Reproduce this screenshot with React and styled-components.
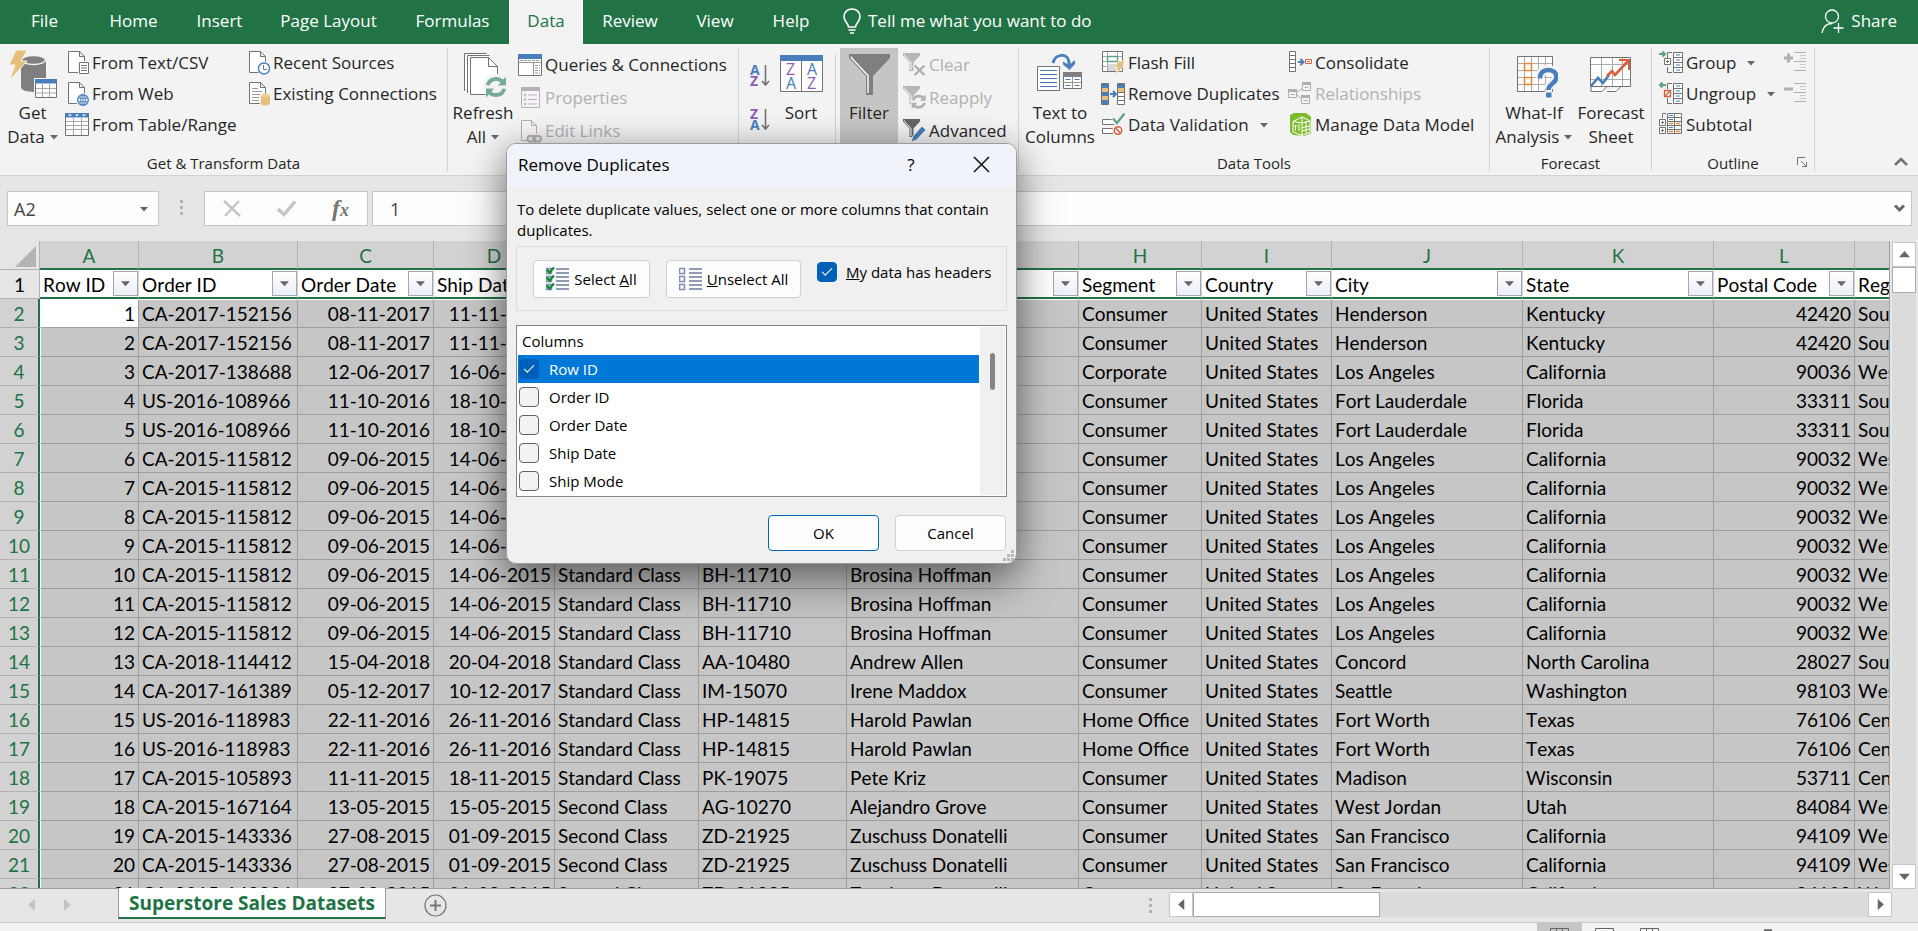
import React from "react";
import styled, { createGlobalStyle, css } from "styled-components";

const UI_FONT = '"Open Sans", "Noto Sans", sans-serif';
const CELL_FONT = 'Lato, "Open Sans", sans-serif';
const GREEN = "#217346";

const GlobalStyle = createGlobalStyle`
  *, *::before, *::after { box-sizing: border-box; }
  body { margin: 0; overflow: hidden; font-family: ${UI_FONT}; color: #262626; background: #e6e6e6; }
  button, input { font: inherit; color: inherit; }
  button { background: none; border: 0; padding: 0; }
  svg { display: block; flex: none; }
`;

const Window = styled.div`
  position: relative;
  height: 100vh;
  display: flex;
  flex-direction: column;
  overflow: hidden;
`;

/* ---------- Tab strip ---------- */

const TabStrip = styled.nav`
  display: flex;
  flex: none;
  height: 44px;
  background: ${GREEN};
  color: #fff;
  font-size: 17px;
  line-height: 42px;
`;
const Tab = styled.button`
  width: ${(p) => p.$w}px;
  padding-bottom: 2px;
  text-align: center;
  white-space: nowrap;
  ${(p) => p.$active && css`background: #f3f3f3; color: ${GREEN};`}
`;
const TellMe = styled.button`
  display: flex;
  gap: 6px;
  padding: 0 0 2px 13px;
  align-items: center;
  white-space: nowrap;
`;
const ShareButton = styled(TellMe)`
  margin-left: auto;
  padding-right: 21px;
  gap: 6px;
`;

/* ---------- Ribbon ---------- */

const Ribbon = styled.section`
  display: flex;
  flex: none;
  height: 132px;
  padding: 4px 0;
  background: #f3f3f3;
  border-bottom: 1px solid #d2d2d2;
  font-size: 17px;
`;
const Group = styled.div`
  display: flex;
  flex-direction: column;
  flex: none;
  width: ${(p) => p.$w}px;
  border-right: 1px solid #d2d2d2;
`;
const GroupBody = styled.div`
  display: flex;
  flex: 1;
  min-height: 0;
  padding-left: ${(p) => p.$pad || 0}px;
`;
const GroupLabel = styled.div`
  display: flex;
  justify-content: center;
  position: relative;
  height: 16px;
  font-size: 15px;
  line-height: 16px;
`;
const Launcher = styled.button`
  position: absolute;
  right: 6px;
  top: 2px;
`;
const LargeButton = styled.button`
  display: flex;
  flex-direction: column;
  align-items: center;
  width: ${(p) => p.$w}px;
  height: 106px;
  padding-top: 2px;
  line-height: 24px;
  white-space: nowrap;
  background: ${(p) => (p.$pressed ? "#c5c5c5" : "none")};
  svg.large { margin-bottom: 3px; }
`;
const LabelLine = styled.span`
  display: flex;
  align-items: center;
  gap: 5px;
`;
const Stack = styled.div`
  display: flex;
  flex-direction: column;
  flex: none;
  width: ${(p) => (p.$w ? p.$w + "px" : "auto")};
`;
const SmallButton = styled.button`
  display: flex;
  align-items: center;
  gap: 3px;
  height: ${(p) => p.$h || 31}px;
  padding-bottom: ${(p) => (p.$h ? 0 : 2)}px;
  line-height: 24px;
  white-space: nowrap;
  color: ${(p) => (p.disabled ? "#b1b1b1" : "inherit")};
  svg.arrow { margin-left: 8px; }
`;
const OrderButton = styled.button`
  display: flex;
  align-items: center;
  justify-content: center;
  width: 28px;
  height: 44px;
`;
const SortColumn = styled(Stack)`
  padding: 5px 0 0 4px;
  margin-left: 4px;
  margin-right: -4px;
`;
const Divider = styled.div`
  width: 1px;
  height: 92px;
  margin: 6px 4px 0;
  background: #d2d2d2;
`;
const CollapseButton = styled.button`
  margin: auto 10px 4px auto;
`;

/* ---------- Formula bar ---------- */

const FormulaBar = styled.section`
  display: flex;
  flex: none;
  height: 65px;
  padding: 15px 6px 15px 7px;
  background: #e6e6e6;
  font-size: 18px;
`;
const Field = styled.div`
  display: flex;
  align-items: center;
  height: 35px;
  border: 1px solid #c6c6c6;
  background: #fdfdfd;
  color: #444;
  padding-right: ${(p) => p.$end || 0}px;
  width: ${(p) => (p.$w ? p.$w + "px" : "auto")};
  flex: ${(p) => (p.$w ? "none" : "1")};
`;
const FieldInput = styled.input`
  flex: 1;
  min-width: 0;
  height: 100%;
  border: 0;
  background: none;
  outline: none;
  padding: 0 0 0 ${(p) => p.$pad}px;
`;
const Dots = styled.span`
  display: grid;
  align-content: center;
  justify-content: center;
  gap: 3px;
  width: ${(p) => p.$w}px;
  height: ${(p) => p.$h}px;
  i { width: 3px; height: 3px; background: #b4b4b4; }
`;
const FormulaActions = styled(Field)`
  justify-content: space-between;
  padding: 0 18px;
  margin-right: 4px;
`;
const FxButton = styled.button`
  font: italic bold 24px "Liberation Serif", serif;
  line-height: 28px;
  color: #767676;
  small { font-size: 18px; }
`;

/* ---------- Sheet ---------- */

const SheetArea = styled.main`
  display: flex;
  flex: 1;
  min-height: 0;
`;
const GridClip = styled.div`
  flex: 1;
  min-width: 0;
  overflow: hidden;
  border-right: 1px solid #9f9f9f;
  border-bottom: 1px solid #9f9f9f;
`;
const Grid = styled.table`
  table-layout: fixed;
  width: 1975px;
  border-collapse: separate;
  border-spacing: 0;
  font-family: ${CELL_FONT};
  font-size: 19px;
  line-height: 24px;
  font-kerning: none;
  color: #000;
  th, td { height: 29px; padding: 2px 3px 0; font-weight: 400; white-space: nowrap; overflow: hidden; }
`;
const ColumnHead = styled.th`
  background: #d2d2d2;
  color: ${GREEN};
  border-right: 1px solid #b1b1b1;
  border-bottom: 2px solid ${GREEN};
  && { padding-top: 3px; }
`;
const Corner = styled.th`
  background: #e6e6e6;
  border-right: 1px solid #b1b1b1;
  border-bottom: 1px solid #b1b1b1;
  svg { margin: 0 0 0 12px; }
`;
const RowHead = styled.th`
  text-align: center;
  border-bottom: 1px solid #b1b1b1;
  ${(p) =>
    p.$selected
      ? css`background: #d2d2d2; color: ${GREEN}; border-right: 2px solid ${GREEN};`
      : css`background: #e6e6e6; border-right: 1px solid #b1b1b1;`}
`;
const TitleCell = styled.td`
  background: #fff;
  border-right: 1px solid #d4d4d4;
  border-bottom: 2px solid ${GREEN};
  && { padding: 0 0 0 3px; }
`;
const TitleInner = styled.div`
  display: flex;
  justify-content: space-between;
  align-items: center;
  height: 27px;
  line-height: 27px;
  span { padding-top: 2px; }
`;
const FilterButton = styled.button`
  display: grid;
  place-items: center;
  flex: none;
  width: 25px;
  height: 25px;
  border: 1px solid #a3a9b4;
  background: linear-gradient(#fdfdfe, #eceff5);
`;
const Cell = styled.td`
  background: ${(p) => (p.$active ? "#fff" : "#c6c6c6")};
  text-align: ${(p) => (p.$right ? "right" : "left")};
  border-right: 1px solid #9f9f9f;
  border-bottom: 1px solid #9f9f9f;
  ${(p) => p.$first && css`border-left: 1px solid #fff;`}
  ${(p) => p.$top && css`border-top: 1px solid #fff; && { padding-top: 0; }`}
`;
const VScroll = styled.div`
  display: flex;
  flex-direction: column;
  width: 24px;
  margin: 1px 2px 0;
  background: #dbdbdb;
`;
const ScrollButton = styled.button`
  display: grid;
  place-items: center;
  flex: none;
  width: 24px;
  height: 25px;
  border: 1px solid #c6c6c6;
  background: #fff;
`;
const VThumb = styled.div`
  height: 26px;
  border: 1px solid #ababab;
  background: #fff;
  margin-bottom: auto;
`;

/* ---------- Sheet tabs and status ---------- */

const SheetBar = styled.footer`
  display: flex;
  flex: none;
  height: 34px;
  background: #e6e6e6;
  border-bottom: 1px solid #c6c6c6;
`;
const SheetNav = styled.div`
  display: flex;
  align-items: center;
  gap: 29px;
  width: 118px;
  padding: 0 0 2px 28px;
`;
const SheetTab = styled.button`
  height: 31px;
  width: 268px;
  margin-top: -1px;
  background: #fff;
  color: ${GREEN};
  border: 1px solid #9f9f9f;
  border-top: 0;
  border-bottom: 2px solid ${GREEN};
  font-weight: 700;
  font-size: 19px;
  line-height: 26px;
  white-space: nowrap;
`;
const AddSheet = styled.button`
  margin: 0 auto 0 38px;
`;
const HScroll = styled.div`
  display: flex;
  width: 723px;
  height: 25px;
  margin: 3px 26px 0 6px;
  background: #dbdbdb;
`;
const HThumb = styled.div`
  width: 187px;
  margin-right: auto;
  border: 1px solid #ababab;
  background: #fff;
`;
const StatusBar = styled.div`
  display: flex;
  justify-content: flex-end;
  flex: none;
  height: 8px;
  padding-right: 146px;
  background: #f3f3f3;
  overflow: hidden;
`;
const ViewButton = styled.button`
  display: flex;
  justify-content: center;
  width: 45px;
  height: 30px;
  padding-top: 5px;
  background: ${(p) => (p.$active ? "#c6c6c6" : "none")};
`;
const ZoomThumb = styled.span`
  width: 8px;
  height: 18px;
  margin: 6px 0 0 92px;
  background: #767676;
`;

/* ---------- Dialog ---------- */

const Dialog = styled.div`
  position: absolute;
  left: 506px;
  top: 143px;
  width: 511px;
  display: flex;
  flex-direction: column;
  border: 1px solid #9c9c9c;
  border-radius: 10px;
  background: #f0f0f0;
  color: #000;
  font-size: 15px;
  line-height: 21px;
  overflow: hidden;
`;
const DialogShadow = styled.div`
  position: absolute;
  left: 506px;
  top: 143px;
  width: 511px;
  height: 421px;
  border-radius: 10px;
  box-shadow: 0 20px 44px rgba(0, 0, 0, 0.4), 0 2px 30px rgba(0, 0, 0, 0.22);
`;
const DialogTitle = styled.header`
  display: flex;
  align-items: center;
  height: 43px;
  padding: 0 26px 2px 11px;
  background: #f0f3fa;
  font-size: 17px;
  h1 { margin: 0 auto 0 0; font-size: 17px; font-weight: 400; }
`;
const HelpButton = styled.button`
  width: 24px;
  margin-right: 50px;
`;
const DialogBody = styled.div`
  padding: 12px 9px 12px;
`;
const Message = styled.p`
  margin: 0 0 5px 1px;
`;
const OptionsBox = styled.div`
  display: flex;
  gap: 16px;
  height: 65px;
  padding: 13px 0 13px 16px;
  border: 1px solid #dcdcdc;
`;
const PushButton = styled.button`
  display: flex;
  align-items: center;
  justify-content: center;
  gap: 5px;
  width: ${(p) => p.$w}px;
  height: ${(p) => p.$h}px;
  flex: none;
  border: 1px solid ${(p) => (p.$primary ? "#0067c0" : "#d0d0d0")};
  border-radius: 4px;
  background: #fdfdfd;
  white-space: nowrap;
`;
const CheckLabel = styled.label`
  display: flex;
  align-items: center;
  gap: 9px;
  height: ${(p) => p.$h}px;
  white-space: nowrap;
  ${(p) => p.$highlight && css`background: #0078d7; color: #fff;`}
  ${(p) => p.$row && css`padding-left: 1px; gap: 10px;`}
`;
const CheckBox = styled.input`
  appearance: none;
  display: grid;
  place-items: center;
  flex: none;
  width: 20px;
  height: 20px;
  margin: 0;
  border: 1px solid #626262;
  border-radius: 4px;
  background: #f3f3f3;
  &:checked { background: #005fb8; border-color: #005fb8; }
  &:checked::after {
    content: "";
    width: 10px;
    height: 5px;
    border: solid #fff;
    border-width: 0 0 1px 1px;
    transform: rotate(-45deg);
    margin-bottom: 3px;
  }
`;
const ListBox = styled.div`
  display: flex;
  height: 172px;
  margin-top: 14px;
  padding: 1px;
  border: 1px solid #828790;
  background: #fff;
`;
const ListItems = styled.div`
  flex: 1;
`;
const ListHead = styled.div`
  height: 28px;
  padding: 4px 0 0 4px;
`;
const ListScroll = styled.div`
  width: 25px;
  margin-left: 1px;
  padding: 26px 0 0 10px;
  background: #f0f0f0;
`;
const ListThumb = styled.div`
  width: 5px;
  height: 37px;
  border-radius: 3px;
  background: #868686;
`;
const DialogActions = styled.div`
  display: flex;
  justify-content: flex-end;
  gap: 16px;
  margin-top: 18px;
  padding-right: 1px;
`;
const Grip = styled.svg`
  position: absolute;
  right: 1px;
  bottom: 1px;
`;

/* ---------- Icons ---------- */

const Arrow = ({ dir = "down", color = "#666", size = 8 }) => {
  const angle = { down: 0, left: 90, up: 180, right: 270 }[dir];
  return (
    <svg className="arrow" width={size} height={size} viewBox="0 0 8 8">
      <path d="M0 2h8L4 6.5z" fill={color} transform={`rotate(${angle} 4 4)`} />
    </svg>
  );
};
const S = ({ children, ...rest }) => (
  <svg width="24" height="24" viewBox="0 0 24 24" fill="none" stroke="#737373" {...rest}>{children}</svg>
);
const L = ({ children }) => (
  <svg className="large" width="48" height="48" viewBox="0 0 48 48" fill="none" stroke="#737373">{children}</svg>
);
const Page = () => <path d="M3.500.5h11l5 5v16h-16zM14.500.5v5h5" fill="#fff" />;

const TextCsvIcon = () => <S><Page /><path d="M14.500 11.500h9v11h-9z" fill="#fff" stroke="#f3f3f3" strokeWidth="3" /><path d="M14.500 11.500h9v11h-9z" fill="#fff" /><path d="M16 14.500h6M16 17h6M16 19.500h6" /></S>;
const WebIcon = () => <S><Page /><circle cx="18" cy="18" r="7" fill="#f3f3f3" stroke="none" /><g stroke="#4a7ebb"><circle cx="18" cy="18" r="5.300" fill="#fff" strokeWidth="1.300" /><ellipse cx="18" cy="18" rx="2.300" ry="5.300" /><path d="M13 16.200h10M13 19.800h10M18 13v10" /></g></S>;
const TableIcon = () => <S><path d="M.5 1.500h23v21H.5z" fill="#fff" /><path d="M0 0h24v4.500H0z" fill="#4a7ebb" stroke="none" /><path d="M3 1.500h4l-2 2zM10 1.500h4l-2 2zM17 1.500h4l-2 2z" fill="#fff" stroke="none" /><path d="M1 8.500h22M1 12.500h22M1 16.500h22M8.500 5v17M16.500 5v17" stroke="#a8a8a8" /></S>;
const RecentIcon = () => <S><Page /><circle cx="18" cy="17.500" r="7" fill="#f3f3f3" stroke="none" /><circle cx="18" cy="17.500" r="5.500" fill="#fff" stroke="#4a7ebb" strokeWidth="1.400" /><path d="M17.500 14v4.500h3.500" /></S>;
const ExistingIcon = () => <S><Page /><path d="M6 6.500h6M6 9.500h10M6 12.500h9M6 15.500h7M6 18.500h7" stroke="#999" /><path d="M14 12h10v12H14z" fill="#f3f3f3" stroke="none" /><path d="M15 13.500v8c0 2.500 9 2.500 9 0v-8z" fill="#e8bf7a" stroke="none" /><ellipse cx="19.500" cy="13.500" rx="4.500" ry="1.800" fill="#f0cf94" stroke="none" /></S>;
const GetDataIcon = () => (
  <L>
    <path d="M12 10v27c0 6.500 25 6.500 25 0V10z" fill="#7f7f7f" stroke="none" />
    <ellipse cx="24.500" cy="10" rx="12" ry="4.500" fill="#7f7f7f" stroke="#f3f3f3" strokeWidth="1.300" />
    <path d="M7 0h11l-6 11h6L.5 30.500 6 15H0z" fill="#e8bf7a" stroke="#f3f3f3" strokeWidth="1" />
    <path d="M25 28h23v20H25z" fill="#f3f3f3" stroke="none" />
    <path d="M26.500 29.500h21v18h-21z" fill="#fff" /><path d="M26 29h22v4.500H26z" fill="#4a7ebb" stroke="none" />
    <path d="M27 38.500h20M27 43h20M33.500 34v13M40.500 34v13" stroke="#a8a8a8" />
  </L>
);
const Cycle = ({ x, y, s = 1, color }) => (
  <g transform={`translate(${x} ${y}) scale(${s})`} stroke="none" fill={color}>
    <path d="M1 9C2 4 6 1 11 1c3 0 5.500 1 7 2.500L21 1v8.500h-8l2.500-3C14.500 5.500 13 5 11 5 8 5 5.500 6.500 4.500 9.500z" />
    <path d="M21 13c-1 5-5 8-10 8-3 0-5.500-1-7-2.500L1 21.500v-9h8l-2.500 3c1 1 2.500 1.500 4.500 1.500 3 0 5.500-1.500 6.500-4.500z" />
  </g>
);
const RefreshIcon = () => (
  <L>
    <path d="M5.500 41V3.500h22M8.500 43V5.500h22M11.500 7.500h18l9 9v28h-27z" fill="#fff" /><path d="M29.500 7.500v9h9" />
    <circle cx="37" cy="37" r="13" fill="#f3f3f3" stroke="none" /><Cycle x={26} y={26} color="#76ab96" />
  </L>
);
const QueriesIcon = () => <S><path d="M.5 2.500h23v20H.5z" fill="#fff" /><path d="M0 1h24v5H0z" fill="#4a7ebb" stroke="none" /><path d="M1 9.500h22M15.500 10v12" stroke="#999" /><path d="M17 12.500h5M17 15h5M17 17.500h5M17 20h5M2 7.500h20" stroke="#999" strokeDasharray="3 1" /></S>;
const PropertiesIcon = () => <S stroke="#b5b0b5"><path d="M3.500 2.500h18v19h-18z" fill="#faf4fa" /><path d="M3 1h19v4H3z" fill="#b5b0b5" stroke="none" /><circle cx="7" cy="9" r="1" /><circle cx="7" cy="13.500" r="1" /><circle cx="7" cy="18" r="1" /><path d="M10 9h9M10 13.500h9M10 18h9" /></S>;
const EditLinksIcon = () => <S stroke="#b5b0b5"><path d="M3.500 1.500h10l5 5v15h-15zM13.500 1.500v5h5" fill="#faf4fa" /><path d="M9 15h15v9H9z" fill="#f0f0f0" stroke="none" /><rect x="9.500" y="17" width="8" height="5.500" rx="2.700" strokeWidth="2" /><rect x="15" y="17" width="8" height="5.500" rx="2.700" strokeWidth="2" /></S>;
const letter = { fontFamily: "Open Sans, sans-serif", stroke: "none" };
const OrderIcon = ({ first, second, c1, c2 }) => (
  <S><text x="1" y="12" fontSize="14" fontWeight="700" fill={c1} {...letter}>{first}</text><text x="1" y="23" fontSize="14" fontWeight="700" fill={c2} {...letter}>{second}</text><path d="M16.500 2v20M13 18l3.500 4 3.500-4" strokeWidth="1.600" /></S>
);
const SortIcon = () => (
  <L>
    <path d="M3.500 5.500h42v36h-42zM24.500 11v30" fill="#fff" /><path d="M3 5h43v6H3z" fill="#4a7ebb" stroke="none" />
    <g fontSize="16" {...letter}>
      <text x="9" y="25" fill="#8e5bb5">Z</text><text x="9" y="39" fill="#4a7ebb">A</text>
      <text x="30" y="25" fill="#4a7ebb">A</text><text x="30" y="39" fill="#8e5bb5">Z</text>
    </g>
  </L>
);
const FilterIcon = () => <L><path d="M4 4h41v4L28 26v19h-7V26L4 8z" fill="#7f7f7f" stroke="none" /><path d="M6.500 6.500v1.500L23 25.500V43" stroke="#fff" strokeWidth="1.400" /></L>;
const SmallFunnel = ({ color, light = "#fff" }) => <><path d="M1 0h17v2.500l-6.500 7V18h-4V9.500L1 2.500z" fill={color} stroke="none" /><path d="M2.500 1.500v1l6.500 7V17" stroke={light} /></>;
const ClearIcon = () => <S><SmallFunnel color="#b8b4b8" /><path d="M12 12l11 10M23 12L12 22" stroke="#f3f3f3" strokeWidth="5" /><path d="M12.500 12.500l10 9.500M22.500 12.500l-10 9.500" stroke="#aaa" strokeWidth="2.200" /></S>;
const ReapplyIcon = () => <S><SmallFunnel color="#b8b4b8" /><circle cx="17" cy="16" r="8" fill="#f3f3f3" stroke="none" /><Cycle x={9} y={8} s={0.7} color="#b0b0b0" /></S>;
const AdvancedIcon = () => <S><SmallFunnel color="#666" /><path d="M9 23l2-6L20 7l4 4-9.500 10z" fill="#4a7ebb" stroke="#f3f3f3" /></S>;
const TextColumnsIcon = () => (
  <L>
    <path d="M1.500 16.500h22v24h-22z" fill="#fff" /><path d="M4 20.500h17M4 24.500h17M4 28.500h17M4 32.500h17M4 36.500h17" stroke="#4a7ebb" />
    <path d="M27.500 22.500h18v16h-18z" fill="#fff" /><path d="M27 22h19v5H27z" fill="#7f7f7f" stroke="none" /><path d="M28 32.500h17M36.500 27v11" stroke="#999" /><path d="M29.500 29.500h5M38.500 29.500h5M29.500 35.500h5M38.500 35.500h5" stroke="#4a7ebb" />
    <path d="M17 13C19 3 32 3 33 12v5" stroke="#4a7ebb" strokeWidth="3" /><path d="M27 11.500l6 3.500 6-5v4L33.500 20 27 14.500z" fill="#4a7ebb" stroke="none" />
  </L>
);
const FlashIcon = () => <S><path d="M1.500.5h20v20h-20z" fill="#fff" /><path d="M2 5.500h19M2 10.500h19M2 15.500h19M6.500 1v19M16.500 1v19" stroke="#aaa" /><path d="M6.500 5.500h10v5h-10z" fill="#fff" stroke="#62a08a" strokeWidth="1.400" /><path d="M7 13h8v7H7z" fill="#d8d8d8" stroke="none" /><path d="M17 10h7l-3 5h2.500L14 23.500l3-7h-3z" fill="#e8bf7a" stroke="#f3f3f3" strokeWidth=".6" /></S>;
const DuplicatesIcon = () => <S><path d="M.5 1.500h7v21h-7zM16.500 1.500h7v21h-7z" fill="#fff" /><path d="M1 2h6v4H1zM1 10h6v4H1zM1 18h6v4H1zM17 2h6v4h-6z" fill="#4a7ebb" stroke="none" /><path d="M1 6h6v4H1zM1 14h6v4H1zM17 6h6v4h-6z" fill="#e8bf7a" stroke="none" /><path d="M17 10.500h6M17 14.500h6M17 18.500h6" /><path d="M9 12h5.500M12 9l3 3-3 3" stroke="#4a7ebb" strokeWidth="2" /></S>;
const ValidationIcon = () => <S><path d="M1.500 6.500h12v5h-12zM1.500 15.500h12v5h-12z" fill="#fff" /><path d="M12 5.500l4 5L23.500 0" stroke="#f3f3f3" strokeWidth="5" /><path d="M12 5.500l4 4.500L23.500.5" stroke="#62a08a" strokeWidth="2.400" /><circle cx="17" cy="17.500" r="5.500" fill="#f3f3f3" stroke="none" /><circle cx="17" cy="17.500" r="3.800" stroke="#d9603f" strokeWidth="1.500" /><path d="M14.500 15l5 5" stroke="#d9603f" strokeWidth="1.500" /></S>;
const ConsolidateIcon = () => <S><path d="M1.500.5h6v20h-6zM2 4.500h5M2 8.500h5M2 12.500h5M2 16.500h5" fill="#fff" /><path d="M10 11h5M12.500 8l3 3-3 3" stroke="#4a7ebb" strokeWidth="2" /><path d="M17.500 8.500h6v4h-6zM19 10.500h3" fill="#fff" stroke="#d9603f" /></S>;
const RelationIcon = () => <S stroke="#b0b0b0"><path d="M8 11l7-5M8 12l6 5" /><path d="M.5 7.500h8v8h-8zM14.500.5h8v8h-8zM13.500 13.500h8v8h-8z" fill="#f7f2f7" /><path d="M0 7h9v3H0zM14 0h9v3h-9zM13 13h9v3h-9z" fill="#b0b0b0" stroke="none" /><path d="M2.500 12.500h4M16.500 5.500h4M15.500 18.500h4" /></S>;
const ModelIcon = () => <S stroke="none"><path d="M2 2L6 0h12l5 4v16l-7 3-11-1-3-3z" fill="#7cbb2c" /><g stroke="#fff"><path d="M5 8.500L14 4l8 4v11l-8 3.500L5 19zM14 4v18M5 8.500l9 1.500 8-2M14 14.500l8-1.500M14 18l8-2M18 8v12" /><path d="M7.500 18v-6M6 13.500L7.500 12 9 13.500M11 11v7" /></g></S>;
const WhatIfIcon = () => (
  <L>
    <path d="M7.500 6.500h35v35h-35z" fill="#fff" /><path d="M14.500 7v34M21.500 7v34M28.500 7v34M35.500 7v34M8 13.500h34M8 20.500h34M8 27.500h34M8 34.500h34" stroke="#aaa" />
    <path d="M14.500 13.500h7v7h-7zM14.500 27.500h7v7h-7z" fill="#fff" stroke="#e28a3c" strokeWidth="1.600" />
    <path d="M30 28c0-6 4-8.500 8-8.500S46.500 22 46.500 27c0 7-8 6-8 12" stroke="#f3f3f3" strokeWidth="9" /><path d="M35 41h7v7h-7z" fill="#f3f3f3" stroke="none" />
    <path d="M30 28.500c0-6 4-8.500 8-8.500s8.500 2 8.500 7c0 7-8 6-8 13" stroke="#4a7ebb" strokeWidth="4.600" /><path d="M36 42.500h5.500v5H36z" fill="#4a7ebb" stroke="none" />
  </L>
);
const ForecastIcon = () => (
  <L>
    <path d="M4 36l0 5.500h11l5-5M20 41.500h9l5-5" fill="#fff" /><path d="M3.500 7.500h40v29h-40z" fill="#fff" />
    <path d="M14.500 8v28M25.500 8v28M35.500 8v28M4 14.500h39M4 29.500h39" stroke="#aaa" />
    <path d="M4 36l7-8 5 5 6-8" stroke="#4a7ebb" strokeWidth="2.600" /><path d="M20 26l5-5 3 4L41 11" stroke="#d9603f" strokeWidth="2.600" /><path d="M32 10h10v10" stroke="#d9603f" strokeWidth="2" />
  </L>
);
const OutlineSheet = () => <><path d="M14.500 1.500h9v20h-9zM15 6.500h8M15 11.500h8M15 16.500h8" fill="#fff" /><path d="M17 4h4M17 9h4M17 14h4M17 19h4" stroke="#4a7ebb" /><path d="M13 1.500H8.500V7M8.500 16v5.500H13" /></>;
const GroupIcon = () => <S><OutlineSheet /><path d="M5.500 7.500h6v6h-6zM8.500 9v3M7 10.500h3" fill="#fff" /><path d="M0 3h5M3.500.5L6 3 3.500 5.500" stroke="#62a08a" strokeWidth="2" /></S>;
const UngroupIcon = () => <S><OutlineSheet /><path d="M5.500 8.500h6v6h-6zM6.500 13.500l4-4" fill="#fff" stroke="#d9603f" strokeWidth="1.400" /><path d="M7 3H2M3.500.5L1 3l2.500 2.500" stroke="#62a08a" strokeWidth="2" /></S>;
const SubtotalIcon = () => <S><path d="M8.500.5h14v20h-14zM15.500 1v19M9 4.500h13M9 8.500h13M9 12.500h13M9 16.500h13" fill="#fff" /><path d="M10 2.500h4M10 6.500h4M10 14.500h4" stroke="#4a7ebb" /><path d="M10 10.500h4M17 10.500h4M10 18.500h4M17 18.500h4" stroke="#e28a3c" strokeWidth="1.500" /><path d="M7 .5H3.500V5M.5 6.500h6v6h-6zM2 9.500h3M3.500 8v3M.5 14.500h6v6h-6zM2 17.500h3M3.500 16v3" fill="#fff" /></S>;
const DetailIcon = ({ plus }) => <S stroke="#b1b1b1"><path d={plus ? "M0 7h9M4.500 2.500v9" : "M0 7h9"} strokeWidth="3" /><path d="M10 1.500h12M10 10.500h12M10 19.500h12" /><path d="M16 4.500h6M16 7.500h6M16 13.500h6M16 16.500h6" stroke="#ccc" /></S>;
const BulbIcon = () => <svg width="20" height="26" viewBox="0 0 20 26" fill="none" stroke="#fff" strokeWidth="1.600"><path d="M6.500 19c0-4-4.500-5-4.500-10.500C2 4 5.500 1 10 1s8 3 8 7.500C18 14 13.500 15 13.500 19zM6.500 22h7M8 25h4" /></svg>;
const PersonIcon = () => <svg width="24" height="26" viewBox="0 0 24 26" fill="none" stroke="#fff" strokeWidth="1.300"><circle cx="11" cy="8.500" r="6.500" /><path d="M1 25c1-6 4-9.500 10-9.500M17.500 15v10M12.500 20h10" /></svg>;
const ListIcon = ({ checked }) => (
  <svg width="23" height="24" viewBox="0 0 23 24" fill="none">
    {[1, 9, 17].map((y) => (
      <g key={y}>
        <path d={`M.5 ${y + 0.5}h5v5h-5z`} fill={checked ? "#d6dce6" : "#fff"} stroke="#7c8db5" strokeWidth="1.500" />
        <path d={`M10 ${y + 1}h13M10 ${y + 5}h13`} stroke="#6c7a9c" strokeWidth="1.600" />
        {checked && <path d={`M1 ${y + 1.500}l2.500 3 4.500-5`} stroke="#0f8a2a" strokeWidth="2.200" />}
      </g>
    ))}
  </svg>
);

/* ---------- Data ---------- */

const tabs = [["File", 89], ["Home", 89], ["Insert", 83], ["Page Layout", 135], ["Formulas", 113], ["Data", 74], ["Review", 94], ["View", 76], ["Help", 76]];

const columns = [
  ["A", 99, "Row ID", true], ["B", 159, "Order ID"], ["C", 136, "Order Date", true], ["D", 121, "Ship Date", true],
  ["E", 144, "Ship Mode"], ["F", 148, "Customer ID"], ["G", 232, "Customer Name"], ["H", 123, "Segment"],
  ["I", 130, "Country"], ["J", 191, "City"], ["K", 191, "State"], ["L", 141, "Postal Code", true], ["M", 120, "Region"],
];

const brosina = ["CA-2015-115812", "09-06-2015", "14-06-2015", "Standard Class", "BH-11710", "Brosina Hoffman", "Consumer", "Los Angeles", "California", "90032", "West"];
const harold = ["US-2016-118983", "22-11-2016", "26-11-2016", "Standard Class", "HP-14815", "Harold Pawlan", "Home Office", "Fort Worth", "Texas", "76106", "Central"];
const zuschuss = ["CA-2015-143336", "27-08-2015", "01-09-2015", "Second Class", "ZD-21925", "Zuschuss Donatelli", "Consumer", "San Francisco", "California", "94109", "West"];
const claire = ["CA-2017-152156", "08-11-2017", "11-11-2017", "Second Class", "CG-12520", "Claire Gute", "Consumer", "Henderson", "Kentucky", "42420", "South"];
const sean = ["US-2016-108966", "11-10-2016", "18-10-2016", "Standard Class", "SO-20335", "Sean O'Donnell", "Consumer", "Fort Lauderdale", "Florida", "33311", "South"];
const orders = [
  claire, claire,
  ["CA-2017-138688", "12-06-2017", "16-06-2017", "Second Class", "DV-13045", "Darrin Van Huff", "Corporate", "Los Angeles", "California", "90036", "West"],
  sean, sean, brosina, brosina, brosina, brosina, brosina, brosina, brosina,
  ["CA-2018-114412", "15-04-2018", "20-04-2018", "Standard Class", "AA-10480", "Andrew Allen", "Consumer", "Concord", "North Carolina", "28027", "South"],
  ["CA-2017-161389", "05-12-2017", "10-12-2017", "Standard Class", "IM-15070", "Irene Maddox", "Consumer", "Seattle", "Washington", "98103", "West"],
  harold, harold,
  ["CA-2015-105893", "11-11-2015", "18-11-2015", "Standard Class", "PK-19075", "Pete Kriz", "Consumer", "Madison", "Wisconsin", "53711", "Central"],
  ["CA-2015-167164", "13-05-2015", "15-05-2015", "Second Class", "AG-10270", "Alejandro Grove", "Consumer", "West Jordan", "Utah", "84084", "West"],
  zuschuss, zuschuss, zuschuss,
].map((o, i) => [String(i + 1), ...o.slice(0, 7), "United States", ...o.slice(7)]);

/* ---------- Parts ---------- */

const Item = ({ icon, label, h, disabled, menu }) => (
  <SmallButton $h={h} disabled={disabled}>{icon}{label}{menu && <Arrow />}</SmallButton>
);
const Large = ({ icon, lines, w, menu, pressed }) => (
  <LargeButton $w={w} $pressed={pressed}>
    {icon}
    {lines.map((line, i) => <LabelLine key={line}>{line}{menu && i === lines.length - 1 && <Arrow />}</LabelLine>)}
  </LargeButton>
);
const Grabber = ({ w, h }) => <Dots $w={w} $h={h}><i /><i /><i /></Dots>;

function RibbonArea() {
  return (
    <Ribbon>
      <Group $w={448}>
        <GroupBody>
          <Large w={65} icon={<GetDataIcon />} lines={["Get", "Data"]} menu />
          <Stack $w={181}>
            <Item icon={<TextCsvIcon />} label="From Text/CSV" />
            <Item icon={<WebIcon />} label="From Web" />
            <Item icon={<TableIcon />} label="From Table/Range" />
          </Stack>
          <Stack>
            <Item icon={<RecentIcon />} label="Recent Sources" />
            <Item icon={<ExistingIcon />} label="Existing Connections" />
          </Stack>
        </GroupBody>
        <GroupLabel>Get &amp; Transform Data</GroupLabel>
      </Group>
      <Group $w={291}>
        <GroupBody>
          <Large w={70} icon={<RefreshIcon />} lines={["Refresh", "All"]} menu />
          <Stack>
            <Item h={33} icon={<QueriesIcon />} label="Queries & Connections" />
            <Item h={33} icon={<PropertiesIcon />} label="Properties" disabled />
            <Item h={33} icon={<EditLinksIcon />} label="Edit Links" disabled />
          </Stack>
        </GroupBody>
        <GroupLabel />
      </Group>
      <Group $w={280}>
        <GroupBody>
          <SortColumn>
            <OrderButton aria-label="Sort A to Z"><OrderIcon first="A" second="Z" c1="#4a7ebb" c2="#8e5bb5" /></OrderButton>
            <OrderButton aria-label="Sort Z to A"><OrderIcon first="Z" second="A" c1="#8e5bb5" c2="#4a7ebb" /></OrderButton>
          </SortColumn>
          <Large w={60} icon={<SortIcon />} lines={["Sort"]} />
          <Divider />
          <Large w={58} icon={<FilterIcon />} lines={["Filter"]} pressed />
          <GroupBody $pad={4}>
            <Stack>
              <Item h={33} icon={<ClearIcon />} label="Clear" disabled />
              <Item h={33} icon={<ReapplyIcon />} label="Reapply" disabled />
              <Item h={33} icon={<AdvancedIcon />} label="Advanced" />
            </Stack>
          </GroupBody>
        </GroupBody>
        <GroupLabel />
      </Group>
      <Group $w={471}>
        <GroupBody>
          <Large w={82} icon={<TextColumnsIcon />} lines={["Text to", "Columns"]} />
          <Stack $w={187}>
            <Item icon={<FlashIcon />} label="Flash Fill" />
            <Item icon={<DuplicatesIcon />} label="Remove Duplicates" />
            <Item icon={<ValidationIcon />} label="Data Validation" menu />
          </Stack>
          <Stack>
            <Item icon={<ConsolidateIcon />} label="Consolidate" />
            <Item icon={<RelationIcon />} label="Relationships" disabled />
            <Item icon={<ModelIcon />} label="Manage Data Model" />
          </Stack>
        </GroupBody>
        <GroupLabel>Data Tools</GroupLabel>
      </Group>
      <Group $w={162}>
        <GroupBody>
          <Large w={88} icon={<WhatIfIcon />} lines={["What-If", "Analysis"]} menu />
          <Large w={66} icon={<ForecastIcon />} lines={["Forecast", "Sheet"]} />
        </GroupBody>
        <GroupLabel>Forecast</GroupLabel>
      </Group>
      <Group $w={163}>
        <GroupBody $pad={7}>
          <Stack $w={125}>
            <Item icon={<GroupIcon />} label="Group" menu />
            <Item icon={<UngroupIcon />} label="Ungroup" menu />
            <Item icon={<SubtotalIcon />} label="Subtotal" />
          </Stack>
          <Stack>
            <SmallButton disabled aria-label="Show detail"><DetailIcon plus /></SmallButton>
            <SmallButton disabled aria-label="Hide detail"><DetailIcon /></SmallButton>
          </Stack>
        </GroupBody>
        <GroupLabel>
          <span>Outline</span>
          <Launcher aria-label="Outline settings">
            <svg width="11" height="11" viewBox="0 0 11 11" fill="none" stroke="#737373"><path d="M.5 8V.5H8M4 4l5 5M9.500 5v4.500H5" /></svg>
          </Launcher>
        </GroupLabel>
      </Group>
      <CollapseButton aria-label="Collapse ribbon">
        <svg width="14" height="10" viewBox="0 0 14 10" fill="none" stroke="#737373" strokeWidth="2.600"><path d="M1 8l6-6 6 6" /></svg>
      </CollapseButton>
    </Ribbon>
  );
}

function SheetGrid() {
  return (
    <GridClip>
      <Grid>
        <colgroup>
          <col width="40" />
          {columns.map(([name, w]) => <col key={name} width={w} />)}
        </colgroup>
        <thead>
          <tr>
            <Corner aria-label="Select all"><svg width="21" height="21" viewBox="0 0 21 21"><path d="M21 0v21H0z" fill="#b4b4b4" /></svg></Corner>
            {columns.map(([name]) => <ColumnHead key={name} scope="col">{name}</ColumnHead>)}
          </tr>
        </thead>
        <tbody>
          <tr>
            <RowHead scope="row">1</RowHead>
            {columns.map(([name, , title]) => (
              <TitleCell key={name}>
                <TitleInner><span>{title}</span><FilterButton aria-label={`Filter ${title}`}><Arrow size={9} /></FilterButton></TitleInner>
              </TitleCell>
            ))}
          </tr>
          {orders.map((order, r) => (
            <tr key={r}>
              <RowHead scope="row" $selected>{r + 2}</RowHead>
              {order.map((value, c) => (
                <Cell key={c} $right={columns[c][3]} $first={c === 0} $top={r === 0} $active={r === 0 && c === 0}>{value}</Cell>
              ))}
            </tr>
          ))}
        </tbody>
      </Grid>
    </GridClip>
  );
}

function RemoveDuplicates() {
  return (
    <>
      <DialogShadow />
      <Dialog role="dialog" aria-labelledby="dialog-title">
        <DialogTitle>
          <h1 id="dialog-title">Remove Duplicates</h1>
          <HelpButton>?</HelpButton>
          <button aria-label="Close"><svg width="17" height="17" viewBox="0 0 17 17" stroke="#111" strokeWidth="1.500"><path d="M1 1l15 15M16 1L1 16" /></svg></button>
        </DialogTitle>
        <DialogBody>
          <Message>To delete duplicate values, select one or more columns that contain duplicates.</Message>
          <OptionsBox>
            <PushButton $w={117} $h={38}><ListIcon checked /><span>Select <u>A</u>ll</span></PushButton>
            <PushButton $w={135} $h={38}><ListIcon /><span><u>U</u>nselect All</span></PushButton>
            <CheckLabel $h={24}><CheckBox type="checkbox" defaultChecked /><span><u>M</u>y data has headers</span></CheckLabel>
          </OptionsBox>
          <ListBox>
            <ListItems>
              <ListHead>Columns</ListHead>
              {["Row ID", "Order ID", "Order Date", "Ship Date", "Ship Mode"].map((name, i) => (
                <CheckLabel key={name} $h={28} $row $highlight={i === 0}>
                  <CheckBox type="checkbox" defaultChecked={i === 0} />{name}
                </CheckLabel>
              ))}
            </ListItems>
            <ListScroll><ListThumb /></ListScroll>
          </ListBox>
          <DialogActions>
            <PushButton $w={111} $h={36} $primary>OK</PushButton>
            <PushButton $w={111} $h={36}>Cancel</PushButton>
          </DialogActions>
        </DialogBody>
        <Grip width="12" height="12" viewBox="0 0 12 12" fill="#b8b8b8">
          <path d="M8 0h3v3H8zM4 4h3v3H4zM8 4h3v3H8zM0 8h3v3H0zM4 8h3v3H4zM8 8h3v3H8z" />
        </Grip>
      </Dialog>
    </>
  );
}

export default function App() {
  return (
    <Window>
      <GlobalStyle />
      <TabStrip>
        {tabs.map(([name, w]) => <Tab key={name} $w={w} $active={name === "Data"}>{name}</Tab>)}
        <TellMe><BulbIcon />Tell me what you want to do</TellMe>
        <ShareButton><PersonIcon />Share</ShareButton>
      </TabStrip>
      <RibbonArea />
      <FormulaBar>
        <Field $w={152} $end={10}>
          <FieldInput aria-label="Name box" defaultValue="A2" $pad={6} />
          <button aria-label="Name list"><Arrow /></button>
        </Field>
        <Grabber w={45} h={32} />
        <FormulaActions $w={164}>
          <button aria-label="Cancel entry"><svg width="18" height="17" viewBox="0 0 18 17" stroke="#c4c4c4" strokeWidth="2.400"><path d="M1 1l16 15M16 1L2 16" /></svg></button>
          <button aria-label="Enter"><svg width="19" height="17" viewBox="0 0 19 17" fill="none" stroke="#c4c4c4" strokeWidth="3.400"><path d="M1 9l6 5.500L18 1.500" /></svg></button>
          <FxButton aria-label="Insert function">f<small>x</small></FxButton>
        </FormulaActions>
        <Field $end={6}>
          <FieldInput aria-label="Formula" defaultValue="1" $pad={17} />
          <button aria-label="Expand formula bar"><svg width="11" height="9" viewBox="0 0 11 9" fill="none" stroke="#666" strokeWidth="3"><path d="M1 1.500L5.500 6 10 1.500" /></svg></button>
        </Field>
      </FormulaBar>
      <SheetArea>
        <SheetGrid />
        <VScroll>
          <ScrollButton aria-label="Scroll up"><Arrow dir="up" size={11} /></ScrollButton>
          <VThumb />
          <ScrollButton aria-label="Scroll down"><Arrow dir="down" size={11} /></ScrollButton>
        </VScroll>
      </SheetArea>
      <SheetBar>
        <SheetNav>
          <button aria-label="Previous sheet"><svg width="7" height="12"><path d="M7 0v12L0 6z" fill="#c4c4c4" /></svg></button>
          <button aria-label="Next sheet"><svg width="7" height="12"><path d="M0 0v12l7-6z" fill="#c4c4c4" /></svg></button>
        </SheetNav>
        <SheetTab>Superstore Sales Datasets</SheetTab>
        <AddSheet aria-label="New sheet">
          <svg width="23" height="23" viewBox="0 0 23 23" fill="none" stroke="#767676"><circle cx="11.500" cy="11.500" r="10.500" strokeWidth="1.200" /><path d="M6 11.500h11M11.500 6v11" strokeWidth="2" /></svg>
        </AddSheet>
        <Grabber w={26} h={32} />
        <HScroll>
          <ScrollButton aria-label="Scroll left"><Arrow dir="left" size={11} /></ScrollButton>
          <HThumb />
          <ScrollButton aria-label="Scroll right"><Arrow dir="right" size={11} /></ScrollButton>
        </HScroll>
      </SheetBar>
      <StatusBar>
        <ViewButton $active aria-label="Normal view"><svg width="19" height="16" fill="none" stroke="#666"><path d="M.5.5h18v15H.5zM6.500 0v16M12.500 0v16M0 5.500h19M0 10.500h19" /></svg></ViewButton>
        <ViewButton aria-label="Page layout view"><svg width="19" height="16" fill="none" stroke="#666"><path d="M.5.5h18v15H.5zM4.500 4.500h10v11" /></svg></ViewButton>
        <ViewButton aria-label="Page break view"><svg width="19" height="16" fill="none" stroke="#666"><path d="M.5.5h18v15H.5zM6.500 0v6M12.500 0v6M0 6.500h19" /></svg></ViewButton>
        <ZoomThumb />
      </StatusBar>
      <RemoveDuplicates />
    </Window>
  );
}
